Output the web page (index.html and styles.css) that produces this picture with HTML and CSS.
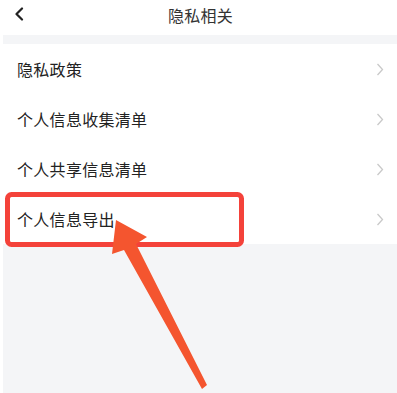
FILE: index.html
```html
<!DOCTYPE html>
<html lang="zh-CN">
<head>
<meta charset="utf-8">
<title>隐私相关</title>
<link rel="stylesheet" href="styles.css">
</head>
<body>
<div class="page">
  <header class="nav">
    <svg class="back" width="10" height="14" viewBox="0 0 10 14"><path d="M8 1.5 L2.5 7 L8 12.5" fill="none" stroke="#222" stroke-width="2.2" stroke-linecap="round" stroke-linejoin="round"/></svg>
    <div class="title">隐私相关</div>
  </header>
  <div class="band"></div>
  <ul class="list">
    <li class="row"><span class="label">隐私政策</span><svg class="chev" width="8" height="13" viewBox="0 0 8 13"><path d="M1.5 1 L6.5 6.5 L1.5 12" fill="none" stroke="#c9c9c9" stroke-width="1.3"/></svg></li>
    <li class="row"><span class="label">个人信息收集清单</span><svg class="chev" width="8" height="13" viewBox="0 0 8 13"><path d="M1.5 1 L6.5 6.5 L1.5 12" fill="none" stroke="#c9c9c9" stroke-width="1.3"/></svg></li>
    <li class="row"><span class="label">个人共享信息清单</span><svg class="chev" width="8" height="13" viewBox="0 0 8 13"><path d="M1.5 1 L6.5 6.5 L1.5 12" fill="none" stroke="#c9c9c9" stroke-width="1.3"/></svg></li>
    <li class="row"><span class="label">个人信息导出</span><svg class="chev" width="8" height="13" viewBox="0 0 8 13"><path d="M1.5 1 L6.5 6.5 L1.5 12" fill="none" stroke="#c9c9c9" stroke-width="1.3"/></svg></li>
  </ul>
</div>
<svg class="annot" width="397" height="393" viewBox="0 0 397 393">
  <rect x="7.5" y="194.5" width="234" height="50" rx="4" ry="4" fill="none" stroke="#f4423a" stroke-width="5"/>
  <polygon points="116,220 147,237 136,244 207,385 202,389 124,250 112,254" fill="#f4552f"/>
</svg>
</body>
</html>
```
FILE: styles.css
```css
html, body {
  margin: 0;
  padding: 0;
  background: #ffffff;
  overflow: hidden;
}
body {
  font-family: "Noto Sans CJK SC", "Noto Sans", sans-serif;
  position: relative;
  width: 397px;
  height: 393px;
}
.page {
  margin-left: 3px;
  height: 393px;
  background: #f4f5f7;
  display: flex;
  flex-direction: column;
}
.nav {
  height: 35px;
  background: #fff;
  position: relative;
  display: flex;
  align-items: center;
  justify-content: center;
  margin-left: -3px;
}
.back {
  position: absolute;
  left: 14px;
  top: 7px;
}
.title {
  font-size: 16px;
  color: #333;
  letter-spacing: 0.3px;
  margin-left: 4px;
  margin-top: -6px;
}
.band {
  height: 9px;
}
.list {
  list-style: none;
  margin: 0 0 0 -3px;
  padding: 0;
  background: #fff;
}
.row {
  height: 50px;
  display: flex;
  align-items: center;
  justify-content: space-between;
  padding: 0 13px 0 17px;
}
.label {
  font-size: 16px;
  color: #222;
  letter-spacing: 0.3px;
}
.chev {
  display: block;
}
.annot {
  position: absolute;
  left: 0;
  top: 0;
}
```
